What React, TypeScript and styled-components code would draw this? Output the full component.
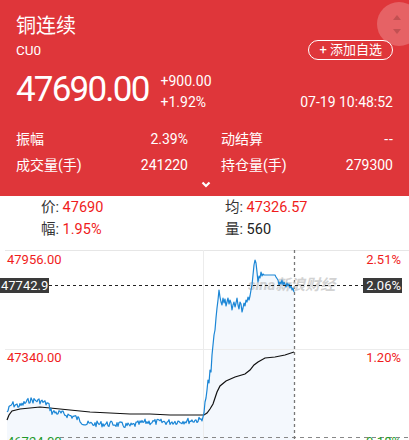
import styled, { createGlobalStyle } from "styled-components";

const GlobalStyle = createGlobalStyle`
  body {
    margin: 0;
    background: #fff;
    font-family: Roboto, "Noto Sans CJK SC", sans-serif;
    overflow: hidden;
  }
`;

const Page = styled.div`
  width: 409px;
  height: 440px;
  overflow: hidden;
`;

const Header = styled.div`
  position: relative;
  height: 196px;
  box-sizing: border-box;
  padding: 11px 16px 0;
  background: #df363a;
  color: #fff;
  overflow: hidden;
`;

const Title = styled.div`
  font-size: 20px;
  line-height: 28px;
  font-family: "Noto Sans CJK SC", sans-serif;
`;

const SubRow = styled.div`
  display: flex;
  justify-content: space-between;
  align-items: center;
  height: 20px;
  margin-top: 1px;
`;

const Code = styled.span`
  font-size: 13.5px;
  line-height: 18px;
`;

const AddButton = styled.button`
  height: 20px;
  padding: 0 10px;
  border: 1px solid #fff;
  border-radius: 10px;
  background: transparent;
  color: #fff;
  font-family: Roboto, "Noto Sans CJK SC", sans-serif;
  font-size: 13px;
  line-height: 18px;
`;

const PriceRow = styled.div`
  display: flex;
  align-items: flex-start;
  margin-top: 10px;
  height: 42px;
`;

const BigPrice = styled.div`
  font-size: 35px;
  line-height: 40px;
  letter-spacing: -1.8px;
`;

const Change = styled.div`
  margin-left: 12px;
  margin-top: 1px;
  font-size: 14px;
  line-height: 21px;
`;

const Time = styled.div`
  margin-left: auto;
  align-self: flex-end;
  font-size: 14px;
  line-height: 20px;
`;

const Stats = styled.div`
  display: grid;
  grid-template-columns: 172px 172px;
  column-gap: 33px;
  row-gap: 2px;
  margin-top: 15px;
`;

const Stat = styled.div`
  display: flex;
  justify-content: space-between;
  font-size: 14px;
  line-height: 24px;
`;

const Dashes = styled.span`
  letter-spacing: 1px;
  margin-right: -1px;
`;

const Toggle = styled.div`
  display: flex;
  justify-content: center;
  margin-top: 4px;
  padding-left: 3px;
`;

const Scroller = styled.div`
  position: absolute;
  top: 2px;
  left: 377px;
  width: 44px;
  height: 44px;
  border-radius: 50%;
  background: rgba(255, 255, 255, 0.22);
  display: flex;
  flex-direction: column;
  align-items: flex-start;
  justify-content: center;
  gap: 9px;
  padding-left: 16px;
  box-sizing: border-box;
`;

const Arrow = styled.div<{ $down?: boolean }>`
  width: 0;
  height: 0;
  border-left: 4px solid transparent;
  border-right: 4px solid transparent;
  ${(p) =>
    p.$down
      ? "border-top: 5px solid rgba(150, 60, 60, 0.45);"
      : "border-bottom: 5px solid rgba(150, 60, 60, 0.45);"}
`;

const Info = styled.div`
  height: 54px;
  box-sizing: border-box;
  padding: 1px 0 0 41px;
  display: grid;
  grid-template-columns: 184px 1fr;
  row-gap: 1px;
  align-content: start;
  font-size: 14.5px;
  line-height: 21px;
  color: #333;
`;

const Value = styled.span<{ $plain?: boolean }>`
  color: ${(p) => (p.$plain ? "#222" : "#f01c1c")};
`;

const Chart = styled.svg`
  display: block;
  font-family: Roboto, "Noto Sans CJK SC", sans-serif;
`;

// rough minute data, page coordinates
function rng(seed: number) {
  let s = seed;
  return () => {
    s = (s * 9301 + 49297) % 233280;
    return s / 233280;
  };
}

const morningKeys: [number, number][] = [
  [7, 412], [12, 404], [20, 406], [30, 400], [40, 401], [48, 404], [52, 412],
  [60, 413], [75, 417], [86, 424], [100, 424], [115, 424], [130, 426],
  [145, 422], [170, 422], [200, 420], [203, 417],
];

function buildMorning() {
  const r = rng(7);
  const pts: [number, number][] = [];
  for (let i = 0; i < morningKeys.length - 1; i++) {
    const [x0, y0] = morningKeys[i];
    const [x1, y1] = morningKeys[i + 1];
    for (let x = x0; x < x1; x += 1) {
      const t = (x - x0) / (x1 - x0);
      pts.push([x, y0 + (y1 - y0) * t + (r() - 0.5) * 6]);
    }
  }
  return pts;
}

const afternoon: [number, number][] = [
  [204, 413], [205, 402], [206, 398], [207, 390], [208, 380], [209, 383],
  [210, 370], [211, 372], [212, 355], [213, 345], [214, 335], [215, 330],
  [216, 318], [217, 308], [218, 300], [219, 290], [220, 297], [221, 302],
  [222, 305], [223, 298], [224, 303], [225, 299], [226, 306], [227, 302],
  [228, 298], [229, 304], [230, 300], [231, 303], [232, 310], [233, 305],
  [234, 302], [235, 307], [236, 303], [237, 298], [238, 305], [239, 309],
  [240, 302], [241, 304], [242, 312], [243, 308], [244, 303], [245, 306],
  [246, 300], [247, 302], [248, 297], [249, 300], [250, 296], [251, 290],
  [252, 285], [253, 275], [254, 265], [255, 260], [256, 263], [257, 272],
  [258, 282], [259, 276], [260, 278], [261, 272], [262, 276], [263, 274],
  [264, 275], [272, 275], [275, 275], [276, 277], [278, 280], [279, 285],
  [280, 282], [281, 284], [282, 280], [283, 285], [284, 282], [286, 287],
  [287, 283], [288, 286], [289, 284], [290, 288], [291, 285], [292, 290],
  [293, 288], [294, 292],
];

const avg: [number, number][] = [
  [7, 420], [9, 415], [12, 411], [20, 409], [30, 408], [40, 407], [50, 408],
  [70, 410], [90, 412], [110, 413], [130, 414], [150, 414], [170, 415],
  [204, 415], [207, 413], [210, 409], [213, 404], [215, 398], [217, 392],
  [220, 386], [226, 381], [235, 377], [245, 374], [250, 370], [254, 365],
  [258, 362], [265, 358], [275, 357], [285, 355], [294, 352],
];

const price = [...buildMorning(), ...afternoon];
const Y0 = 250;
const toPts = (a: [number, number][]) =>
  a.map(([x, y]) => `${x},${(y - Y0).toFixed(1)}`).join(" ");

function MinuteChart() {
  const line = toPts(price);
  const area = `7,190 ${line} 294,190`;
  return (
    <Chart width={409} height={190} viewBox="0 0 409 190">
      <polygon points={area} fill="#f4f8fd" />
      <line x1={5} y1={0.5} x2={409} y2={0.5} stroke="#e6e6e6" />
      <line x1={5} y1={99.5} x2={409} y2={99.5} stroke="#ececec" />
      <line x1={203.5} y1={0} x2={203.5} y2={190} stroke="#ececec" />
      <line x1={60} y1={187.5} x2={409} y2={187.5} stroke="#888" strokeDasharray="4 4" />
      <line x1={294.5} y1={0} x2={294.5} y2={190} stroke="#777" strokeWidth={1.3} strokeDasharray="3 3" />

      <text x={248} y={40} fontSize={15} fontStyle="italic" fontWeight={700} fill="#c4c4c4" opacity={0.75}>
        sina新浪财经
      </text>

      <polyline points={toPts(avg)} fill="none" stroke="#111" strokeWidth={1.2} />
      <polyline points={line} fill="none" stroke="#1b86d6" strokeWidth={1.2} strokeLinejoin="round" />

      <line x1={49} y1={35.5} x2={363} y2={35.5} stroke="#222" strokeDasharray="3 3" />
      <rect x={0} y={28} width={49} height={15} fill="#3a3a3a" />
      <text x={1} y={40} fontSize={13} fill="#fff">47742.9</text>
      <rect x={363} y={28} width={39} height={15} fill="#3a3a3a" />
      <text x={401} y={40} fontSize={13} fill="#fff" textAnchor="end">2.06%</text>

      <text x={7} y={14} fontSize={13} fill="#f01c1c">47956.00</text>
      <text x={401} y={14} fontSize={13} fill="#f01c1c" textAnchor="end">2.51%</text>
      <text x={7} y={112} fontSize={13} fill="#f01c1c">47340.00</text>
      <text x={401} y={112} fontSize={13} fill="#f01c1c" textAnchor="end">1.20%</text>
      <text x={7} y={196} fontSize={13} fill="#1f9a2a">46724.00</text>
      <text x={401} y={196} fontSize={13} fill="#1f9a2a" textAnchor="end">-0.18%</text>
    </Chart>
  );
}

export default function App() {
  return (
    <Page>
      <GlobalStyle />
      <Header>
        <Title>铜连续</Title>
        <SubRow>
          <Code>CU0</Code>
          <AddButton>+ 添加自选</AddButton>
        </SubRow>
        <PriceRow>
          <BigPrice>47690.00</BigPrice>
          <Change>
            <div>+900.00</div>
            <div>+1.92%</div>
          </Change>
          <Time>07-19 10:48:52</Time>
        </PriceRow>
        <Stats>
          <Stat><span>振幅</span><span>2.39%</span></Stat>
          <Stat><span>动结算</span><Dashes>--</Dashes></Stat>
          <Stat><span>成交量(手)</span><span>241220</span></Stat>
          <Stat><span>持仓量(手)</span><span>279300</span></Stat>
        </Stats>
        <Toggle>
          <svg width="10" height="7" viewBox="0 0 10 7">
            <path d="M1.5 1.5 L5 5 L8.5 1.5" fill="none" stroke="#fff" strokeWidth="2.2" />
          </svg>
        </Toggle>
        <Scroller>
          <Arrow />
          <Arrow $down />
        </Scroller>
      </Header>
      <Info>
        <div>价: <Value>47690</Value></div>
        <div>均: <Value>47326.57</Value></div>
        <div>幅: <Value>1.95%</Value></div>
        <div>量: <Value $plain>560</Value></div>
      </Info>
      <MinuteChart />
    </Page>
  );
}
